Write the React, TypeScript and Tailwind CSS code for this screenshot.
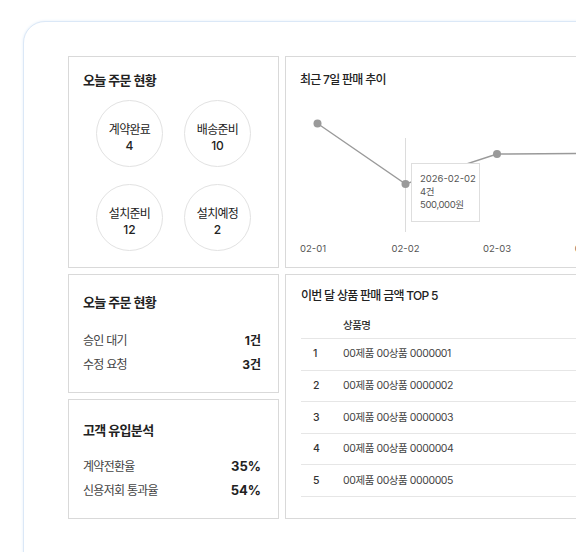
import React from 'react'

const font = { fontFamily: 'Inter, "Noto Sans CJK KR", sans-serif' }

const orderStatus = [
  { label: '계약완료', value: 4 },
  { label: '배송준비', value: 10 },
  { label: '설치준비', value: 12 },
  { label: '설치예정', value: 2 },
]

const products = [
  '00제품 00상품 0000001',
  '00제품 00상품 0000002',
  '00제품 00상품 0000003',
  '00제품 00상품 0000004',
  '00제품 00상품 0000005',
]

// chart coords are relative to the chart area (box inner left, below title)
const points = [
  { x: 31.5, y: 35.5 },
  { x: 119.5, y: 96 },
  { x: 211, y: 66 },
  { x: 303, y: 65.5 },
  { x: 395, y: 65 },
]
const labels = [
  { x: 27, t: '02-01' },
  { x: 119.5, t: '02-02' },
  { x: 211, t: '02-03' },
  { x: 303, t: '02-04' },
  { x: 395, t: '02-05' },
]

const SalesChart = () => {
  const d = points.map((p, i) => `${i === 0 ? 'M' : 'L'}${p.x} ${p.y}`).join(' ')
  return (
    <div className="relative h-full border border-[#d9d9d9] bg-white">
      <div className="px-[14px] pt-[15px] text-[12px] leading-[16px] font-medium tracking-[-0.06em] text-[#222]">
        최근 7일 판매 추이
      </div>
      <svg width="480" height="179" className="block">
        <line x1="119.5" y1="50" x2="119.5" y2="144" stroke="#dcdcdc" strokeWidth="1" />
        <path d={d} fill="none" stroke="#9a9a9a" strokeWidth="1.4" />
        {points.map((p, i) => (
          <circle key={i} cx={p.x} cy={p.y} r="4" fill="#9a9a9a" />
        ))}
        {labels.map((l) => (
          <text key={l.t} x={l.x} y="164" textAnchor="middle" fontSize="9.5" fill="#555" style={font}>
            {l.t}
          </text>
        ))}
      </svg>
      {/* tooltip */}
      <div className="absolute left-[125px] top-[106px] h-[59px] w-[69px] whitespace-nowrap border border-[#dedede] bg-white pl-[8px] pt-[8px] text-[9.5px] leading-[13px] text-[#555]">
        <div>2026-02-02</div>
        <div className="tracking-[-0.04em]">4건</div>
        <div className="tracking-[-0.04em]">500,000원</div>
      </div>
    </div>
  )
}

export default function App() {
  return (
    <div className="h-[552px] w-full overflow-hidden bg-white" style={font}>
      <div className="ml-[23px] mt-[21px] h-[600px] w-[760px] rounded-[22px] border border-[#dbe8f7] bg-white pl-[44px] pt-[34px] shadow-[0_0_3px_#e2edf9]">
        <div className="grid grid-cols-[211px_1fr] grid-rows-[212px_245px] gap-[6px]">
          {/* 오늘 주문 현황 - circles */}
          <div className="border border-[#d9d9d9] px-[14px] pt-[14px]">
            <div className="text-[13px] leading-[18px] font-semibold tracking-[-0.05em] text-[#222]">오늘 주문 현황</div>
            <div className="mt-[11px] grid grid-cols-[67px_67px] justify-center gap-x-[21px] gap-y-[17px]">
              {orderStatus.map((s) => (
                <div
                  key={s.label}
                  className="flex h-[67px] w-[67px] flex-col items-center justify-center rounded-full border border-[#e2e2e2] pt-[8px] text-[12px] leading-[16px] text-[#222]"
                >
                  <span className="tracking-[-0.06em]">{s.label}</span>
                  <span className="font-medium">{s.value}</span>
                </div>
              ))}
            </div>
          </div>

          <SalesChart />

          {/* left bottom column */}
          <div className="flex flex-col gap-[6px]">
            <div className="h-[119px] border border-[#d9d9d9] px-[14px] pt-[18px]">
              <div className="text-[13px] leading-[18px] font-semibold tracking-[-0.05em] text-[#222]">오늘 주문 현황</div>
              <div className="mt-[18px] pr-[3px] text-[12px] leading-[23.5px]">
                <div className="flex justify-between">
                  <span className="tracking-[-0.06em] text-[#444]">승인 대기</span>
                  <span className="font-bold text-[#222]">1건</span>
                </div>
                <div className="flex justify-between">
                  <span className="tracking-[-0.06em] text-[#444]">수정 요청</span>
                  <span className="font-bold text-[#222]">3건</span>
                </div>
              </div>
            </div>
            <div className="h-[120px] border border-[#d9d9d9] px-[14px] pt-[21px]">
              <div className="text-[13px] leading-[18px] font-semibold tracking-[-0.05em] text-[#222]">고객 유입분석</div>
              <div className="mt-[16px] pr-[3px] text-[12px] leading-[23.5px]">
                <div className="flex justify-between">
                  <span className="tracking-[-0.06em] text-[#444]">계약전환율</span>
                  <span className="text-[13px] font-bold text-[#222]">35%</span>
                </div>
                <div className="flex justify-between">
                  <span className="tracking-[-0.06em] text-[#444]">신용저회 통과율</span>
                  <span className="text-[13px] font-bold text-[#222]">54%</span>
                </div>
              </div>
            </div>
          </div>

          {/* TOP 5 table */}
          <div className="border border-[#d9d9d9] px-[15px] pt-[13px]">
            <div className="text-[12px] leading-[16px] font-medium tracking-[-0.06em] text-[#222]">
              이번 달 상품 판매 금액 TOP 5
            </div>
            <div className="mt-[9px]">
              <div className="flex h-[26px] items-center border-b border-[#e6e6e6] text-[10.5px] font-medium text-[#333]">
                <span className="w-[42px]" />
                <span className="tracking-[-0.05em]">상품명</span>
              </div>
              {products.map((p, i) => (
                <div key={p} className="flex h-[31.6px] items-center border-b border-[#e6e6e6] text-[10.5px] text-[#444]">
                  <span className="w-[42px] pl-[12px] font-medium text-[#333]">{i + 1}</span>
                  <span className="tracking-[-0.04em]">{p}</span>
                </div>
              ))}
            </div>
          </div>
        </div>
      </div>
    </div>
  )
}
